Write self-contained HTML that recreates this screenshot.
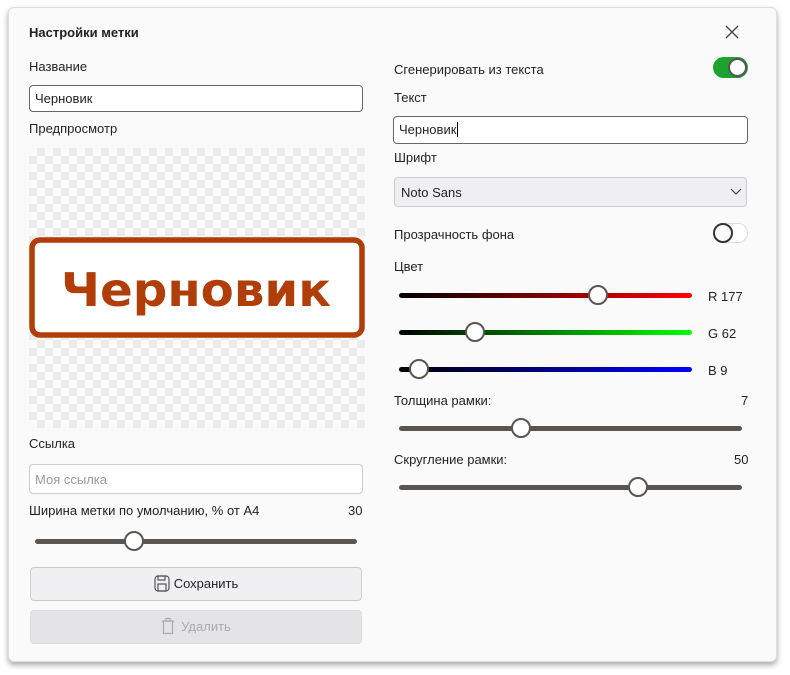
<!DOCTYPE html>
<html><head><meta charset="utf-8"><style>
*{box-sizing:border-box;margin:0;padding:0}
body{width:790px;height:675px;background:#fff;font-family:"Liberation Sans","DejaVu Sans",sans-serif;font-size:13px;color:#222;position:relative;overflow:hidden}
.dlg{position:absolute;left:8px;top:7px;width:769px;height:655px;background:#fafafa;border:1px solid #ddd;border-radius:6px;box-shadow:0 3px 6px rgba(0,0,0,.35)}
.a{position:absolute;white-space:nowrap}
.inp{position:absolute;border:1px solid #666;border-radius:4px;background:#fff;height:27px;padding:5px 5px;font-size:13px}
.track{position:absolute;height:5px;border-radius:3px;background:#5a5550}
.knob{position:absolute;width:20px;height:20px;border-radius:50%;background:#fff;border:2px solid #5a5550}
.btn{position:absolute;border:1px solid #ccc;border-radius:4px;background:#f0f0f2;text-align:center;line-height:32px;font-size:13px}
.chk{position:absolute;left:29px;top:148px;width:336px;height:280px;background-color:#fafafa;background-image:linear-gradient(45deg,#ebebeb 25%,transparent 25%,transparent 75%,#ebebeb 75%),linear-gradient(45deg,#ebebeb 25%,transparent 25%,transparent 75%,#ebebeb 75%);background-size:16px 16px;background-position:0 0,8px 8px}
</style></head><body>
<div class="dlg"></div>
<div class="a" style="left:29px;top:25px;font-weight:bold">Настройки метки</div>
<svg class="a" style="left:724px;top:24px" width="16" height="16"><path d="M2 2L14 14M14 2L2 14" stroke="#444" stroke-width="1.3"/></svg>
<div class="a" style="left:29px;top:59px">Название</div>
<div class="inp" style="left:29px;top:85px;width:334px">Черновик</div>
<div class="a" style="left:29px;top:121px">Предпросмотр</div>
<div class="chk"></div>
<svg class="a" style="left:29px;top:236px" width="338" height="103">
<rect x="3" y="4" width="330" height="95" rx="8" fill="#fff" stroke="#b13e09" stroke-width="5.5"/>
<text x="32" y="70" font-family="DejaVu Sans,sans-serif" font-weight="bold" font-size="46" fill="#b13e09" textLength="270" lengthAdjust="spacingAndGlyphs">Черновик</text>
</svg>
<div class="a" style="left:29px;top:436px">Ссылка</div>
<div class="inp" style="left:29px;top:464px;width:334px;height:30px;border-color:#ccc;color:#999;padding-top:7px">Моя ссылка</div>
<div class="a" style="left:29px;top:503px">Ширина метки по умолчанию, % от А4</div>
<div class="a" style="left:348px;top:503px">30</div>
<div class="track" style="left:35px;top:539px;width:322px"></div>
<div class="knob" style="left:124px;top:531px"></div>
<div class="btn" style="left:30px;top:567px;width:332px;height:34px">
<svg width="16" height="17" style="vertical-align:-4px;margin-right:4px"><rect x="1" y="1" width="14" height="15" rx="3" fill="none" stroke="#555" stroke-width="1.2"/><rect x="4" y="1" width="7" height="4" fill="none" stroke="#555" stroke-width="1.2"/><rect x="4" y="9" width="8" height="7" fill="none" stroke="#555" stroke-width="1.2"/></svg>Сохранить</div>
<div class="btn" style="left:30px;top:610px;width:332px;height:34px;background:#e4e4e6;color:#aaa;border-color:#ddd">
<svg width="14" height="18" style="vertical-align:-4px;margin-right:6px"><path d="M1 4H13M5 4V1.5H9V4M2.5 4V16.5H11.5V4" fill="none" stroke="#aaa" stroke-width="1.2"/></svg>Удалить</div>

<div class="a" style="left:394px;top:62px">Сгенерировать из текста</div>
<div class="a" style="left:713px;top:57px;width:35px;height:21px;border-radius:11px;background:#1ea22f"></div>
<div class="a" style="left:728px;top:58px;width:19px;height:19px;border-radius:50%;background:#fff;border:2px solid #555"></div>
<div class="a" style="left:394px;top:90px">Текст</div>
<div class="inp" style="left:393px;top:116px;width:355px;height:28px">Черновик<span style="border-left:1px solid #000;margin-left:1px"></span></div>
<div class="a" style="left:394px;top:150px">Шрифт</div>
<div class="a" style="left:394px;top:177px;width:353px;height:30px;background:#efeff1;border:1px solid #ccc;border-radius:4px;padding:7px 6px">Noto Sans</div>
<svg class="a" style="left:730px;top:188px" width="12" height="8"><path d="M1 1L6 6L11 1" fill="none" stroke="#444" stroke-width="1.2"/></svg>
<div class="a" style="left:394px;top:227px">Прозрачность фона</div>
<div class="a" style="left:713px;top:223px;width:35px;height:20px;border-radius:10px;background:#fff;border:1px solid #ddd"></div>
<div class="a" style="left:713px;top:223px;width:20px;height:20px;border-radius:50%;background:#fff;border:2px solid #333"></div>
<div class="a" style="left:394px;top:259px">Цвет</div>
<div class="track" style="left:399px;top:293px;width:293px;background:linear-gradient(90deg,#000,#f00)"></div>
<div class="knob" style="left:588px;top:285px"></div>
<div class="a" style="left:708px;top:289px">R 177</div>
<div class="track" style="left:399px;top:330px;width:293px;background:linear-gradient(90deg,#000,#0f0)"></div>
<div class="knob" style="left:465px;top:322px"></div>
<div class="a" style="left:708px;top:326px">G 62</div>
<div class="track" style="left:399px;top:367px;width:293px;background:linear-gradient(90deg,#000,#00f)"></div>
<div class="knob" style="left:409px;top:359px"></div>
<div class="a" style="left:708px;top:363px">B 9</div>
<div class="a" style="left:394px;top:393px">Толщина рамки:</div>
<div class="a" style="left:741px;top:393px">7</div>
<div class="track" style="left:399px;top:426px;width:343px"></div>
<div class="knob" style="left:511px;top:418px"></div>
<div class="a" style="left:394px;top:452px">Скругление рамки:</div>
<div class="a" style="left:734px;top:452px">50</div>
<div class="track" style="left:399px;top:485px;width:343px"></div>
<div class="knob" style="left:628px;top:477px"></div>
</body></html>
